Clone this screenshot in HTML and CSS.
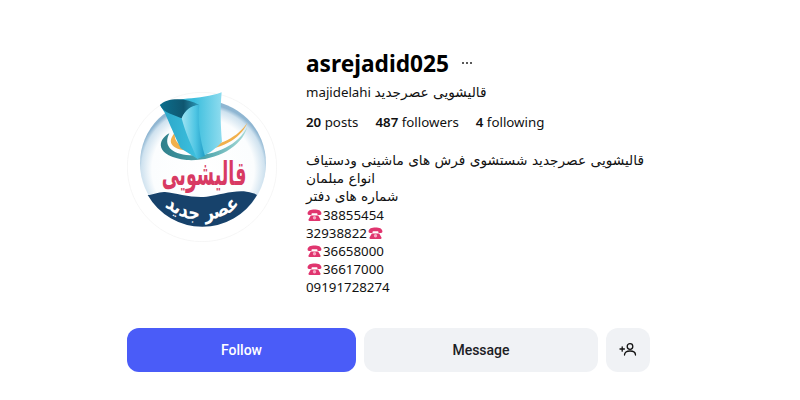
FILE: index.html
```html
<html>
  <head>
    <title>asrejadid025</title>
    <link rel="stylesheet" href="styles.css">
  </head>
  <body>
    <svg width="0" height="0" class="defs">
      <symbol id="phone" viewBox="0 0 16 13">
        <path fill="#e0356f" d="M.5 5C.5 1.500 4 .5 8 .5s7.500 1 7.500 4.500c0 1-.5 1.500-1.500 1.500h-2c-.7 0-1-.4-1-1.200V4.500H5v.8c0 .8-.3 1.200-1 1.200H2C1 6.500.5 6 .5 5z"/>
        <path fill="#e0356f" d="M4 7h8l2.500 4.500c.2.800-.2 1.500-1 1.500H2.500c-.8 0-1.200-.7-1-1.500z"/>
        <circle cx="8" cy="9.500" r="1.800" fill="#f7a9c4"/>
      </symbol>
    </svg>
    <div class="profile">
      <div class="top">
        <svg class="avatar" viewBox="51 36 450 450">
          <defs>
            <radialGradient id="bg" cx=".5" cy=".55" r=".52">
              <stop offset="0" stop-color="#ffffff"/>
              <stop offset=".78" stop-color="#fbfdfe"/>
              <stop offset=".94" stop-color="#cfe2ef"/>
              <stop offset="1" stop-color="#8fb6d2"/>
            </radialGradient>
            <linearGradient id="roll" x1="0" y1="0" x2="1" y2="0">
              <stop offset="0" stop-color="#2aa5c7"/>
              <stop offset=".55" stop-color="#3bbedd"/>
              <stop offset="1" stop-color="#8fdcef"/>
            </linearGradient>
            <linearGradient id="roll2" x1="0" y1="0" x2="1" y2="0">
              <stop offset="0" stop-color="#9fe4f3"/>
              <stop offset=".6" stop-color="#4ec5e3"/>
              <stop offset="1" stop-color="#1f9cc6"/>
            </linearGradient>
            <linearGradient id="inside" x1="0" y1="0" x2="1" y2="0">
              <stop offset="0" stop-color="#0c6f8d"/>
              <stop offset=".6" stop-color="#0f5670"/>
              <stop offset="1" stop-color="#2f9dbc"/>
            </linearGradient>
            <linearGradient id="swoosh" x1="0" y1="0" x2="1" y2="0">
              <stop offset="0" stop-color="#2f7f8b"/>
              <stop offset=".5" stop-color="#4ca4ac"/>
              <stop offset="1" stop-color="#a9dcd8"/>
            </linearGradient>
            <path id="arc" d="M130 350 Q270 490 425 350"/>
          </defs>
          <circle cx="276" cy="261" r="224" fill="#fff" stroke="#f2f2f2" stroke-width="2"/>
          <circle cx="279" cy="250" r="189" fill="url(#bg)"/>
          <path fill="#17426b" d="M113 345C130 345 145 335 165 336 200 340 250 355 290 350 330 345 370 330 410 335 425 338 435 340 441 345A189 189 0 0 1 113 345z"/>
          <path fill="url(#swoosh)" d="M178 160C140 180 135 230 230 240 310 245 395 205 412 140 385 195 315 228 240 226 180 222 160 195 178 160z"/>
          <path fill="#f1b04c" d="M195 158C165 190 190 215 260 212 330 208 390 180 412 128 385 170 330 198 265 203 215 206 190 190 195 158z"/>
          <path fill="url(#roll)" d="M150 75C190 50 270 62 335 37 330 90 332 140 336 185 320 205 290 225 262 236L212 205C195 170 178 130 165 100z"/>
          <path fill="url(#inside)" d="M150 75C170 52 230 52 268 75 240 78 225 92 215 115 195 105 160 100 150 75z"/>
          <path fill="url(#roll2)" d="M215 115C225 90 245 75 268 75 262 120 270 180 285 228L262 236C245 200 225 155 215 115z"/>
          <text class="logo-red" transform="translate(282 314) scale(.69 1.300)" text-anchor="middle">قالیشویی</text>
          <text class="logo-white" textLength="245" lengthAdjust="spacingAndGlyphs"><textPath href="#arc" startOffset="50%" text-anchor="middle">عصر جدید</textPath></text>
        </svg>
        <div class="info">
          <div class="name-row">
            <h2 class="username">asrejadid025</h2>
            <svg class="more" viewBox="0 0 12 4"><circle cx="2" cy="2" r="1"/><circle cx="6" cy="2" r="1"/><circle cx="10" cy="2" r="1"/></svg>
          </div>
          <div class="fullname">majidelahi <span class="fa">قالیشویی عصرجدید</span></div>
          <ul class="stats">
            <li><b>20</b> posts</li>
            <li><b>487</b> followers</li>
            <li><b>4</b> following</li>
          </ul>
          <div class="bio">
            <div class="fa">قالیشویی عصرجدید شستشوی فرش های ماشینی ودستیاف انواع مبلمان</div>
            <div class="fa">شماره های دفتر</div>
            <div><svg class="ph"><use href="#phone"/></svg>38855454</div>
            <div>32938822<svg class="ph"><use href="#phone"/></svg></div>
            <div><svg class="ph"><use href="#phone"/></svg>36658000</div>
            <div><svg class="ph"><use href="#phone"/></svg>36617000</div>
            <div>09191728274</div>
          </div>
        </div>
      </div>
      <div class="actions">
        <button class="btn follow">Follow</button>
        <button class="btn message">Message</button>
        <button class="btn add">
          <svg viewBox="0 0 18 13" width="18" height="13" fill="none" stroke="#111" stroke-width="1.300" stroke-linecap="round">
            <circle cx="11" cy="3.500" r="2.800"/>
            <path d="M5.500 12c0-2.700 2-4 5.500-4s5.500 1.300 5.500 4"/>
            <path d="M1 6h4.400M3.200 3.800v4.400"/>
          </svg>
        </button>
      </div>
    </div>
  </body>
</html>
```
FILE: styles.css
```css
body {
  margin: 0;
  background: #fff;
  color: #111;
  font-family: "Noto Sans", "DejaVu Sans", sans-serif;
  font-size: 13.3px;
}
.defs { position: absolute; }
.fa {
  font-family: "DejaVu Sans", sans-serif;
  font-size: 13.7px;
}
.profile {
  width: 523px;
  padding: 45px 0 0 127px;
}
.top {
  display: flex;
  align-items: flex-start;
  gap: 29px;
}
.avatar {
  width: 150px;
  height: 150px;
  flex: none;
  margin-top: 47px;
}
.logo-red {
  font: 700 76px "DejaVu Sans", sans-serif;
  fill: #d83a63;
}
.logo-white {
  font: 700 58px "DejaVu Sans", sans-serif;
  fill: #fff;
}
.info { width: 345px; }
.name-row {
  display: flex;
  align-items: center;
  gap: 12px;
  height: 36px;
}
.username {
  margin: 0;
  font-size: 22.7px;
  font-weight: 700;
  color: #000;
}
.more { width: 12px; height: 4px; fill: #222; }
.fullname {
  margin-top: 1px;
  line-height: 20px;
}
.stats {
  display: flex;
  gap: 17px;
  margin: 10px 0 0;
  padding: 0;
  list-style: none;
  line-height: 20px;
}
.stats b { font-weight: 600; }
.bio {
  margin-top: 19px;
  line-height: 18.2px;
}
.ph { width: 15px; height: 12px; vertical-align: -1px; margin: 0 1px; }
.actions {
  display: flex;
  gap: 8px;
  margin-top: 31px;
}
.btn {
  height: 44px;
  border: 0;
  border-radius: 12px;
  font: 500 14px "Roboto", sans-serif;
  background: #f0f2f5;
  color: #1c2024;
}
.follow { width: 229px; background: #4a5cf8; color: #fff; }
.message { width: 234px; }
.add {
  width: 44px;
  display: flex;
  align-items: center;
  justify-content: center;
}
```
